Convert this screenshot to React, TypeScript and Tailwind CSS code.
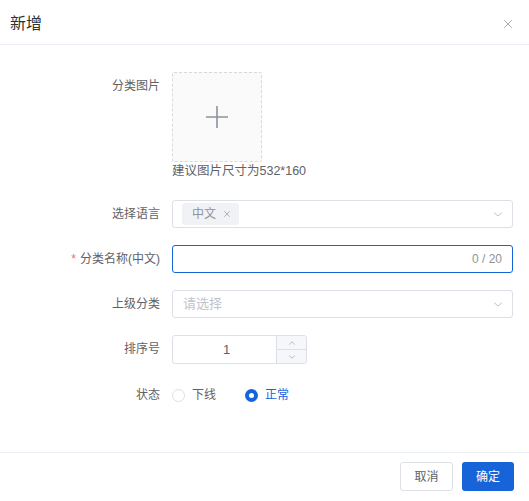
import { ChevronDown, ChevronUp, X } from "lucide-react";

const font = {
  fontFamily: '"Liberation Sans", "Noto Sans CJK SC", sans-serif',
};

function Label({ children, required }: { children: React.ReactNode; required?: boolean }) {
  return (
    <div className="w-[172px] shrink-0 pr-[12px] text-right text-[12px] leading-[28px] text-[#606266]">
      {required && <span className="mr-1 text-[#f56c6c]">*</span>}
      {children}
    </div>
  );
}

function Arrow() {
  return (
    <svg width="12" height="12" viewBox="0 0 12 12" className="text-[#c0c4cc]">
      <path d="M2 4.5 L6 8 L10 4.5" fill="none" stroke="currentColor" strokeWidth="1" />
    </svg>
  );
}

export default function App() {
  return (
    <div className="flex h-[501px] w-[529px] flex-col bg-white" style={font}>
      <div className="flex h-[45px] shrink-0 items-center justify-between border-b border-[#ebeef5] pl-[10px] pr-[14px] pt-[4px]">
        <span className="text-[16px] text-[#303133]">新增</span>
        <X className="h-[14px] w-[14px] text-[#909399]" strokeWidth={1.3} />
      </div>

      <div className="flex-1 pr-[16px] pt-[27px]">
        <div className="flex">
          <Label>分类图片</Label>
          <div>
            <div className="flex h-[90px] w-[90px] items-center justify-center rounded-[2px] border border-dashed border-[#d9d9d9] bg-[#fafafa]">
              <svg width="22" height="22" viewBox="0 0 22 22">
                <path d="M11 0 V22 M0 11 H22" stroke="#8c939d" strokeWidth="1.6" />
              </svg>
            </div>
            <div className="text-[12.5px] leading-[18px] text-[#606266]">建议图片尺寸为532*160</div>
          </div>
        </div>

        <div className="mt-[20px] flex">
          <Label>选择语言</Label>
          <div className="flex h-[28px] flex-1 items-center justify-between rounded-[3px] border border-[#dcdfe6] pl-[9px] pr-[8px]">
            <span className="flex h-[22px] items-center gap-[6px] rounded-[3px] bg-[#f0f2f5] pl-[10px] pr-[7px] text-[12px] text-[#909399]">
              中文
              <X className="h-[10px] w-[10px]" strokeWidth={1.6} />
            </span>
            <Arrow />
          </div>
        </div>

        <div className="mt-[17px] flex">
          <Label required>分类名称(中文)</Label>
          <div className="flex h-[28px] flex-1 items-center justify-end rounded-[3px] border border-[#1764d8] pr-[10px]">
            <span className="text-[12px] text-[#909399]">0 / 20</span>
          </div>
        </div>

        <div className="mt-[17px] flex">
          <Label>上级分类</Label>
          <div className="flex h-[28px] flex-1 items-center justify-between rounded-[3px] border border-[#dcdfe6] pl-[10px] pr-[8px]">
            <span className="text-[13px] text-[#c0c4cc]">请选择</span>
            <Arrow />
          </div>
        </div>

        <div className="mt-[17px] flex">
          <Label>排序号</Label>
          <div className="flex h-[29px] w-[135px] overflow-hidden rounded-[3px] border border-[#dcdfe6]">
            <div className="flex flex-1 items-center justify-center pl-[4px] text-[13px] text-[#606266]">1</div>
            <div className="flex w-[30px] flex-col border-l border-[#dcdfe6] bg-[#f5f7fa] text-[#909399]">
              <div className="flex flex-1 items-center justify-center border-b border-[#dcdfe6]">
                <ChevronUp className="h-[10px] w-[10px]" strokeWidth={1.5} />
              </div>
              <div className="flex flex-1 items-center justify-center">
                <ChevronDown className="h-[10px] w-[10px]" strokeWidth={1.5} />
              </div>
            </div>
          </div>
        </div>

        <div className="mt-[17px] flex">
          <Label>状态</Label>
          <div className="flex items-center text-[12px]">
            <span className="flex items-center text-[#606266]">
              <span className="h-[13px] w-[13px] rounded-full border border-[#dcdfe6] bg-white" />
              <span className="ml-[7px]">下线</span>
            </span>
            <span className="ml-[29px] flex items-center text-[#1764d8]">
              <span className="flex h-[13px] w-[13px] items-center justify-center rounded-full bg-[#1764d8]">
                <span className="h-[5px] w-[5px] rounded-full bg-white" />
              </span>
              <span className="ml-[7px]">正常</span>
            </span>
          </div>
        </div>
      </div>

      <div className="flex h-[49px] shrink-0 items-start justify-end gap-[9px] border-t border-[#ebeef5] pr-[15px] pt-[9px]">
        <button className="h-[29px] w-[53px] rounded-[3px] border border-[#dcdfe6] bg-white text-[12px] text-[#606266]">
          取消
        </button>
        <button className="h-[29px] w-[52px] rounded-[3px] bg-[#1764d8] text-[12px] text-white">
          确定
        </button>
      </div>
    </div>
  );
}
